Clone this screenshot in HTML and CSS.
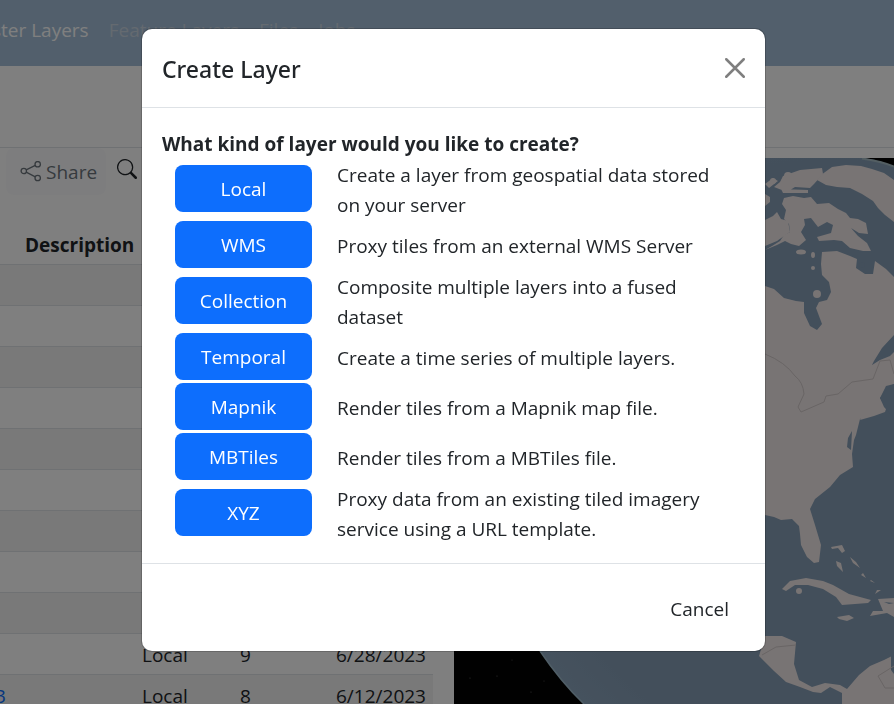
FILE: index.html
```html
<!DOCTYPE html>
<html lang="en">
<head>
<meta charset="utf-8">
<meta name="viewport" content="width=device-width, initial-scale=1">
<title>Raster Layers</title>
<link rel="stylesheet" href="styles.css">
</head>
<body>
<div class="page">
  <nav class="navbar">
    <a class="active" href="#">ster Layers</a>
    <a href="#">Feature Layers</a>
    <a href="#">Files</a>
    <a href="#">Jobs</a>
  </nav>
  <div class="subheader"></div>
  <main class="content">
    <section class="layers">
      <div class="toolbar">
        <button class="share" type="button">
          <svg width="22" height="22" viewBox="0 0 22 22" fill="none" stroke="currentColor" stroke-width="1.3" aria-hidden="true"><circle cx="3.8" cy="10" r="2.7"/><circle cx="17.7" cy="3.2" r="2.7"/><circle cx="17.7" cy="17" r="2.7"/><path d="M6.2 8.8 15.3 4.400M6.2 11.2l9.1 4.6"/></svg>
          Share
        </button>
        <button class="search" type="button" aria-label="Search">
          <svg width="20" height="20" viewBox="0 0 16 16" fill="currentColor" aria-hidden="true"><path d="M11.742 10.344a6.5 6.5 0 1 0-1.397 1.398h-.001q.044.06.098.115l3.85 3.85a1 1 0 0 0 1.415-1.414l-3.85-3.85a1 1 0 0 0-.115-.1zM12 6.5a5.5 5.5 0 1 1-11 0 5.500 5.500 0 0 1 11 0"/></svg>
        </button>
      </div>
      <table>
        <thead><tr><th class="name"></th><th class="desc">Description</th><th class="type"></th><th class="zoom"></th><th></th></tr></thead>
        <tbody>
          <tr><td></td><td></td><td></td><td></td><td></td></tr>
          <tr><td></td><td></td><td></td><td></td><td></td></tr>
          <tr><td></td><td></td><td></td><td></td><td></td></tr>
          <tr><td></td><td></td><td></td><td></td><td></td></tr>
          <tr><td></td><td></td><td></td><td></td><td></td></tr>
          <tr><td></td><td></td><td></td><td></td><td></td></tr>
          <tr><td></td><td></td><td></td><td></td><td></td></tr>
          <tr><td></td><td></td><td></td><td></td><td></td></tr>
          <tr><td></td><td></td><td></td><td></td><td></td></tr>
          <tr><td></td><td></td><td>Local</td><td>9</td><td>6/28/2023</td></tr>
          <tr><td><a href="#">3</a></td><td></td><td>Local</td><td>8</td><td>6/12/2023</td></tr>
        </tbody>
      </table>
    </section>
    <section class="map" aria-label="Globe">
      <svg viewBox="454 158 440 546" preserveAspectRatio="xMinYMin slice" aria-hidden="true">
        <defs><radialGradient id="sea" gradientUnits="userSpaceOnUse" cx="830" cy="460" r="365"><stop offset=".8" stop-color="#869eb6"/><stop offset=".96" stop-color="#8ca5bd"/><stop offset="1" stop-color="#a0bdd2"/></radialGradient></defs>
        <rect x="454" y="158" width="440" height="546" fill="#020202"/>
        <path fill="url(#sea)" d="M454 158H862Q880 160 894 167V704H584Q561 682 540 651Q500 580 454 420Z"/>
        <path d="M862 158.500Q880 161 894 166.500" fill="none" stroke="#a6bcc4" stroke-width="2"/>
        <path d="M540 651Q561 682 584 704" fill="none" stroke="#9fbccd" stroke-width="1.500"/>
        <g fill="#f0e8e8">
          <path d="M765 250 772 246 780 241 784 235 790 232 789 224 784 219 786 210 782 204 784 198 793 196 804 198 811 197 817 204 829 203 838 209 846 213 850 218 858 219 866 223 868 234 859 233 851 228 858 236 867 243 871 251 863 251 850 248 842 241 834 240 819 241 817 237 831 233 833 225 827 222 818 227 811 218 804 219 805 225 801 232 806 240 799 246 791 244 785 241 777 245Z"/>
          <path d="M765 220 773 216 777 212 781 219 788 221 790 232 784 236 777 241 765 246ZM765 194 770 197 770 202 765 206ZM774 187 780 182 783 176 800 170 822 168 823 174 814 184 810 188 795 187 787 192ZM781 189 808 190 808 193 783 193ZM765 184 773 178 778 181 769 188Z"/>
          <path d="M821 175 832 167 846 165 861 166 872 169 884 173 894 180V222L885 215 878 208 873 201 862 194 850 188 837 187 826 185 817 180Z"/>
          <path d="M765 286 774 289 784 298 796 301 804 302 804 313 810 326 817 330 822 324 816 308 819 302 827 300 831 292 829 282 822 275 821 264 822 252 837 251 850 256 857 259 856 268 865 274 873 274 875 261 886 269 894 277V335L882 348 874 361 872 365 880 360 885 358 890 356 894 352V384L886 386 880 398 884 404 874 413 860 419 856 435 854 440 852 454 853 467 840 475 830 487 815 499 810 509 815 525 821 545 819 562 814 563 807 557 801 545 800 534 799 526 792 519 781 520 774 517 765 515Z"/>
          <path d="M880 400 887 406 885 412 874 416 860 420 864 412 875 408ZM782 589 790 581 806 578 823 581 833 585 849 594 871 600 868 603 842 605 836 597 823 589 808 585 795 585 786 591ZM765 636 782 636 796 642 794 664 799 680 812 687 825 683 840 685 847 689 859 675 870 666 884 660 894 655V704H842L842 693 830 687 821 693 813 692 800 687 786 682 774 671 759 656Z"/>
          <path d="M831 547 842 545 845 551 842 553 838 548 832 549ZM836 561 841 563 843 572 837 566ZM850 557 856 562 860 568 853 563ZM863 573 866 578 861 575ZM871 580 875 583 870 581ZM877 590 881 590 875 594ZM878 599 894 598V617L887 613 870 616 873 611 883 611ZM837 617 849 615 854 618 847 621 839 619Z"/>
          <circle cx="799" cy="591" r="3"/><circle cx="817" cy="294" r="4"/><ellipse cx="801" cy="252" rx="5" ry="2.500"/><ellipse cx="813" cy="255" rx="2" ry="3"/><circle cx="813" cy="268" r="2"/><circle cx="788" cy="176" r="4"/><circle cx="773" cy="181" r="3"/>
        </g>
        <g fill="#869eb6"><path d="M891 656 894 652V674L891 670ZM884 602 894 603 889 604ZM848 438 852 431 851 450 847 447Z"/><path d="M880 398 890 386 894 384V418L884 407Z"/><circle cx="862" cy="265" r="3"/></g>
        <g fill="none" stroke="#d2caca" stroke-width="1"><path d="M765 354Q785 362 795 376Q803 382 804 394L798 407 801 412 824 402 826 396 838 394 852 382 873 379 880 361 890 360 894 374M762 655 776 647 796 645M894 666 878 676 885 688H894"/></g>
        <g fill="#666"><circle cx="470" cy="678" r=".6"/><circle cx="497" cy="676" r=".6"/><circle cx="531" cy="692" r=".6"/><circle cx="512" cy="660" r=".5"/><circle cx="544" cy="681" r=".5"/></g>
      </svg>
    </section>
  </main>
</div>

<div class="backdrop">
  <div class="modal" role="dialog" aria-modal="true" aria-labelledby="modal-title">
    <header class="modal-header">
      <h1 id="modal-title">Create Layer</h1>
      <button class="close" type="button" aria-label="Close">
        <svg width="20" height="20" viewBox="0 0 20 20" fill="none" stroke="currentColor" stroke-width="2.500" stroke-linecap="round" aria-hidden="true"><path d="M1.250 1.250 18.750 18.750M18.750 1.250 1.250 18.750"/></svg>
      </button>
    </header>
    <div class="modal-body">
      <h2>What kind of layer would you like to create?</h2>
      <div class="option"><button type="button">Local</button><p>Create a layer from geospatial data stored on your server</p></div>
      <div class="option"><button type="button">WMS</button><p>Proxy tiles from an external WMS Server</p></div>
      <div class="option"><button type="button">Collection</button><p>Composite multiple layers into a fused dataset</p></div>
      <div class="option"><button type="button">Temporal</button><p>Create a time series of multiple layers.</p></div>
      <div class="option"><button type="button">Mapnik</button><p>Render tiles from a Mapnik map file.</p></div>
      <div class="option"><button type="button">MBTiles</button><p>Render tiles from a MBTiles file.</p></div>
      <div class="option"><button type="button">XYZ</button><p>Proxy data from an existing tiled imagery service using a URL template.</p></div>
    </div>
    <footer class="modal-footer"><button class="cancel" type="button">Cancel</button></footer>
  </div>
</div>
</body>
</html>
```
FILE: styles.css
```css
* { box-sizing: border-box; }

body {
  margin: 0;
  color: #212529;
  background: #fff;
  font-family: "Open Sans", "Noto Sans", sans-serif;
  font-size: 19px;
  line-height: 30px;
}

h1, h2, p { margin: 0; }
button { font: inherit; color: inherit; border: 0; background: none; padding: 0; }
a { text-decoration: none; }

.page { height: 100vh; overflow: hidden; display: flex; flex-direction: column; }

.navbar {
  flex: none;
  display: flex;
  gap: 20px;
  height: 66px;
  padding-top: 15px;
  background: #a4bed8;
}
.navbar a { color: #c8d4e0; white-space: nowrap; }
.navbar .active { color: #fff; margin-left: -8px; }

.subheader { flex: none; height: 82px; border-bottom: 1px solid #dee2e6; }

.content { flex: 1; min-height: 0; display: flex; }
.layers { flex: none; width: 454px; padding-right: 21px; }
.toolbar { display: flex; gap: 11px; height: 76px; padding-left: 6px; }
.share {
  display: flex;
  align-items: center;
  gap: 4px;
  width: 100px;
  height: 47px;
  padding-left: 14px;
  color: #6c757d;
  background: #fbfbfc;
  border-radius: 8px;
}
.search { height: 47px; }

table { width: 100%; border-collapse: collapse; table-layout: fixed; }
th, td {
  height: 41px;
  padding: 2px 0 0 10px;
  text-align: left;
  white-space: nowrap;
  border-bottom: 1px solid #dee2e6;
}
th { height: 40px; font-weight: 700; }
.name { width: 15px; }
.desc { width: 117px; }
.type { width: 98px; }
.zoom { width: 96px; }
tbody tr:nth-child(odd) { background: #f2f2f2; }
td:first-child { padding-left: 0; }
td a { color: #0d6efd; margin-left: -5px; }

.map { flex: 1; min-width: 0; margin-top: 10px; overflow: hidden; background: #020202; }
.map svg { display: block; width: 100%; height: 100%; }

.backdrop {
  position: fixed;
  inset: 0;
  display: flex;
  justify-content: center;
  align-items: flex-start;
  padding: 29px 0 29px 13px;
  overflow: auto;
  background: rgba(0, 0, 0, .5);
}
.modal {
  width: 100%;
  max-width: 623px;
  background: #fff;
  border-radius: 10px;
  box-shadow: 0 0 0 1px rgba(0, 0, 0, .18);
}
.modal-header {
  display: flex;
  align-items: center;
  justify-content: space-between;
  height: 79px;
  padding: 0 20px;
  border-bottom: 1px solid #dee2e6;
}
h1 { padding-top: 2px; font-family: "Noto Sans", sans-serif; font-size: 23px; font-weight: 500; }
.close { display: flex; color: #7f7f7f; }

.modal-body { padding: 22px 20px 19px; }
h2 { font-size: 19px; font-weight: 700; line-height: 28px; }
.option {
  display: flex;
  align-items: center;
  gap: 25px;
  min-height: 50px;
  padding: 0 25px 0 13px;
}
.option button {
  flex: none;
  width: 137px;
  height: 47px;
  margin-bottom: 2px;
  padding-top: 2px;
  color: #fff;
  background: #0d6efd;
  border-radius: 8px;
}
.option p { padding-top: 2px; }

.modal-footer {
  display: flex;
  justify-content: flex-end;
  padding: 20px;
  border-top: 1px solid #dee2e6;
}
.cancel { height: 47px; padding: 2px 16px 0; }
```
